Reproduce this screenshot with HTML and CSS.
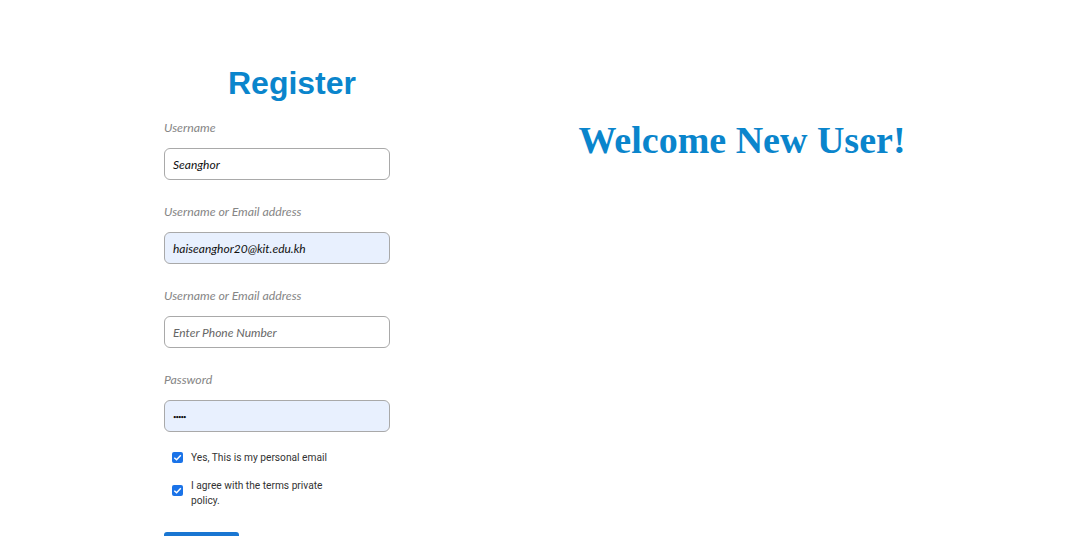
FILE: index.html
```html
<!DOCTYPE html>
<html>
<head>
<meta charset="utf-8">
<link rel="stylesheet" href="styles.css">
</head>
<body>
<div class="page">
  <form class="form">
    <h1 class="title">Register</h1>
    <div class="field">
      <label class="label">Username</label>
      <div class="input">Seanghor</div>
    </div>
    <div class="field">
      <label class="label">Username or Email address</label>
      <div class="input filled">haiseanghor20@kit.edu.kh</div>
    </div>
    <div class="field">
      <label class="label">Username or Email address</label>
      <div class="input placeholder">Enter Phone Number</div>
    </div>
    <div class="field">
      <label class="label">Password</label>
      <div class="input filled pw">•••••</div>
    </div>
    <div class="check">
      <span class="box"><svg viewBox="0 0 12 12" width="11" height="11"><path d="M2.5 6.2 L5 8.5 L9.6 3.6" fill="none" stroke="#fff" stroke-width="1.6"/></svg></span>
      <span class="ctext">Yes, This is my personal email</span>
    </div>
    <div class="check two">
      <span class="box"><svg viewBox="0 0 12 12" width="11" height="11"><path d="M2.5 6.2 L5 8.5 L9.6 3.6" fill="none" stroke="#fff" stroke-width="1.6"/></svg></span>
      <span class="ctext narrow">I agree with the terms private policy.</span>
    </div>
    <button type="button" class="btn">Register</button>
  </form>
  <div class="welcome">
    <h2 class="wtitle">Welcome New User!</h2>
  </div>
</div>
</body>
</html>
```
FILE: styles.css
```css
html, body { margin: 0; padding: 0; background: #fff; }
.page {
  display: flex;
  padding-left: 164px;
  padding-top: 64px;
  height: 472px;
  overflow: hidden;
}
.form {
  width: 226px;
  display: flex;
  flex-direction: column;
  flex-shrink: 0;
}
.title {
  margin: 0;
  font-family: "Liberation Sans", Arial, sans-serif;
  font-weight: bold;
  font-size: 32px;
  line-height: 38px;
  color: #0a85cc;
  text-align: center;
  padding-left: 30px;
  width: 226px;
  box-sizing: border-box;
}
.field { display: flex; flex-direction: column; margin-top: 18px; }
.field + .field { margin-top: 24px; }
.label {
  font-family: "Lato", sans-serif;
  font-style: italic;
  font-size: 12.3px;
  color: #858585;
  line-height: 15px;
  margin-bottom: 13px;
}
.input {
  box-sizing: border-box;
  height: 32px;
  border: 1px solid #a9a9a9;
  border-radius: 6px;
  padding: 0 8px;
  font-family: "Lato", sans-serif;
  font-style: italic;
  font-size: 12px;
  color: #111;
  display: flex;
  align-items: center;
}
.filled { background: #e8f0fe; }
.placeholder { color: #666; }
.pw { font-size: 6px; letter-spacing: -1px; }
.check {
  display: flex;
  align-items: center;
  margin-left: 8px;
  margin-top: 18px;
}
.check.two { margin-top: 13px; align-items: flex-start; }
.box {
  width: 11px; height: 11px;
  background: #1a73e8;
  border-radius: 2px;
  display: flex;
  align-items: center;
  justify-content: center;
  flex-shrink: 0;
}
.check.two .box { margin-top: 7px; }
.ctext {
  font-family: Roboto, sans-serif;
  font-size: 10.2px;
  color: #333;
  margin-left: 8px;
  line-height: 15px;
}
.narrow { width: 140px; }
.btn {
  margin-top: 24px;
  width: 75px;
  height: 30px;
  flex-shrink: 0;
  background: #1976d2;
  border: none;
  border-radius: 3px;
  color: #fff;
  font-family: Roboto, sans-serif;
}
.welcome {
  flex: 1;
  display: flex;
  justify-content: center;
  padding-left: 4px;
}
.wtitle {
  margin: 51px 0 0 0;
  font-family: "Liberation Serif", "Times New Roman", serif;
  font-weight: bold;
  font-size: 38px;
  line-height: 50px;
  color: #0a85cc;
}
```
